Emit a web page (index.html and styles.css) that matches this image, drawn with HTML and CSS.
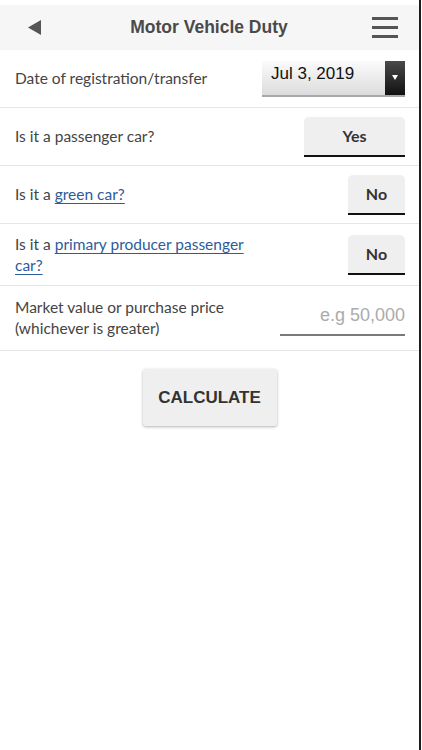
FILE: index.html
```html
<!DOCTYPE html>
<html lang="en">
<head>
    <meta charset="UTF-8">
    <meta name="viewport" content="width=device-width, initial-scale=1.0">
    <title>Motor Vehicle Duty</title>
    <link rel="stylesheet" href="styles.css">
</head>
<body>
    <div class="screen">
        <header class="topbar">
            <svg class="back" width="13" height="15" viewBox="0 0 13 15"><polygon points="0,7.5 13,0 13,15" fill="#555"/></svg>
            <h1>Motor Vehicle Duty</h1>
            <svg class="menu" width="26" height="21" viewBox="0 0 26 21">
                <rect x="0" y="0" width="26" height="3" fill="#555"/>
                <rect x="0" y="9" width="26" height="3" fill="#555"/>
                <rect x="0" y="18" width="26" height="3" fill="#555"/>
            </svg>
        </header>

        <form class="duty-form">
            <div class="row">
                <label>Date of registration/transfer</label>
                <div class="date-select">
                    <span class="date-value">Jul 3, 2019</span>
                    <span class="caret"></span>
                </div>
            </div>

            <div class="row">
                <label>Is it a passenger car?</label>
                <button type="button" class="toggle toggle-wide">Yes</button>
            </div>

            <div class="row">
                <label>Is it a <a href="#">green car?</a></label>
                <button type="button" class="toggle">No</button>
            </div>

            <div class="row row-tall">
                <label class="label-narrow">Is it a <a href="#">primary producer passenger car?</a></label>
                <button type="button" class="toggle">No</button>
            </div>

            <div class="row row-price">
                <label>Market value or purchase price<br>(whichever is greater)</label>
                <input type="text" class="price" placeholder="e.g 50,000">
            </div>
        </form>

        <div class="actions">
            <button type="button" class="calc">CALCULATE</button>
        </div>
    </div>
</body>
</html>
```

FILE: styles.css
```css
body {
    margin: 0;
    background-color: #ffffff;
    font-family: Lato, "Noto Sans", sans-serif;
    color: #444;
}

.screen {
    width: 421px;
    min-height: 750px;
    box-sizing: border-box;
    padding-top: 5px;
    border-right: 2px solid #1c1c1c;
}

.topbar {
    height: 45px;
    background-color: #f6f6f6;
    display: flex;
    align-items: center;
    padding: 0 21px 0 28px;
}

.topbar h1 {
    flex: 1;
    margin: 0;
    padding-left: 5px;
    text-align: center;
    font-family: "Liberation Sans", Arial, sans-serif;
    font-size: 17.5px;
    font-weight: bold;
    color: #4a4a4a;
}

.back, .menu {
    display: block;
}

.row {
    display: flex;
    align-items: center;
    justify-content: space-between;
    min-height: 57px;
    padding: 0 14px 0 15px;
    border-bottom: 1px solid #e6e6e6;
}

.row-tall {
    min-height: 61px;
}

.row-price {
    min-height: 64px;
}

.row label {
    font-size: 15.5px;
    line-height: 21px;
}

.label-narrow {
    max-width: 240px;
}

.row a {
    color: #2d5c9a;
    text-decoration: underline;
    text-underline-offset: 3px;
    text-decoration-thickness: 1px;
}

.date-select {
    display: flex;
    width: 143px;
    height: 34px;
    margin-top: -1px;
    background: linear-gradient(#fbfbfb, #dcdcdc);
    box-shadow: 0 2px 0 #a8a8a8;
}

.date-value {
    flex: 1;
    padding: 3px 0 0 9px;
    font-family: "Liberation Sans", Arial, sans-serif;
    font-size: 17px;
    color: #111;
}

.caret {
    width: 20px;
    position: relative;
    background: linear-gradient(#4a4a4a, #111);
}

.caret::after {
    content: "";
    position: absolute;
    left: 7px;
    top: 14px;
    border-left: 3px solid transparent;
    border-right: 3px solid transparent;
    border-top: 5px solid #fff;
}

.toggle {
    width: 57px;
    height: 40px;
    background-color: #efefef;
    border: none;
    border-bottom: 2px solid #111;
    border-radius: 5px 5px 0 0;
    font-family: Lato, "Noto Sans", sans-serif;
    font-size: 16px;
    font-weight: bold;
    color: #333;
    padding: 0;
}

.toggle-wide {
    width: 101px;
}

.price {
    width: 125px;
    margin-top: 4px;
    padding: 0 0 8px;
    border: none;
    border-bottom: 2px solid #7a7a7a;
    text-align: right;
    font-family: "Liberation Sans", Arial, sans-serif;
    font-size: 18px;
    background: transparent;
    outline: none;
}

.price::placeholder {
    color: #ababab;
}

.actions {
    display: flex;
    justify-content: center;
    padding-top: 18px;
}

.calc {
    width: 134px;
    height: 57px;
    background-color: #efefef;
    border: none;
    border-radius: 3px;
    box-shadow: 0 1px 3px rgba(0, 0, 0, 0.3);
    font-family: "Liberation Sans", Arial, sans-serif;
    font-size: 17px;
    font-weight: bold;
    color: #333;
}
```
